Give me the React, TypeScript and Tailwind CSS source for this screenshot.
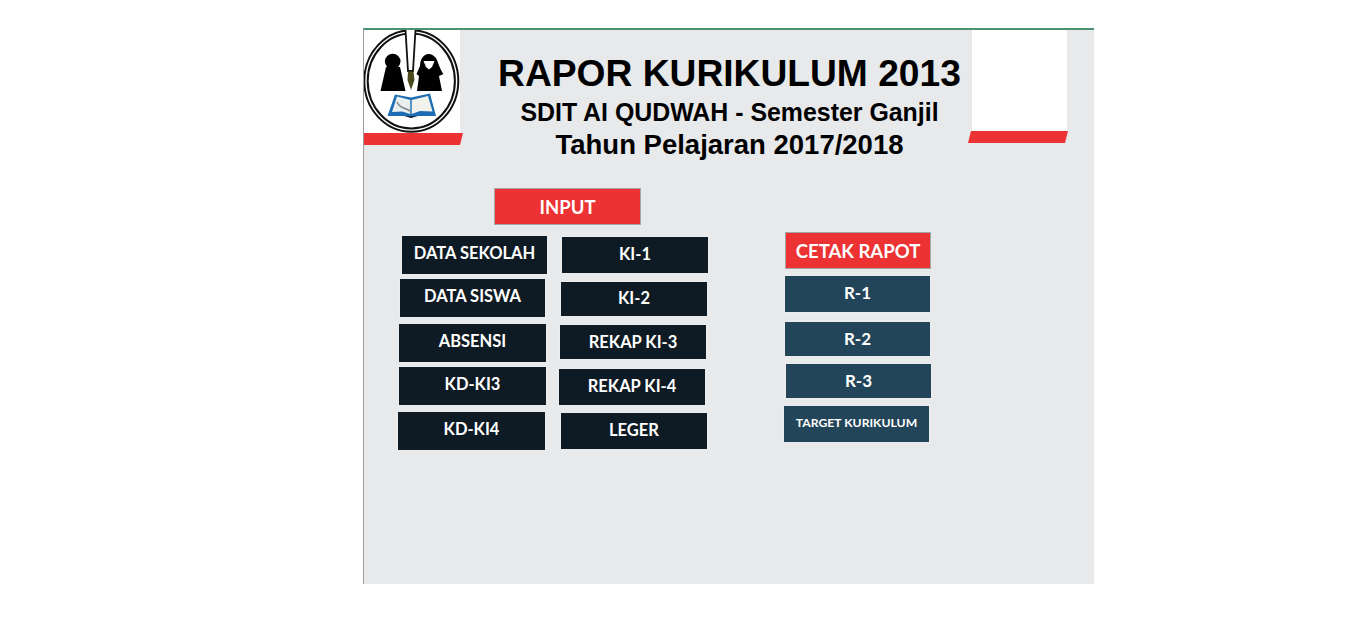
const Dark = ({ label, className }: { label: string; className: string }) => (
  <div className={`bg-[#0f1b24] text-white font-bold text-[16.5px] leading-none flex justify-center shadow-[0_0_0_1px_#ebedef] ${className}`}>
    {label}
  </div>
);

const Teal = ({ label, className }: { label: string; className: string }) => (
  <div className={`bg-[#23455a] text-white font-bold leading-none flex justify-center shadow-[0_0_0_1px_#ebedef] ${className}`}>
    {label}
  </div>
);

const Red = ({ label, className }: { label: string; className: string }) => (
  <div className={`bg-[#ec3232] text-white font-bold text-[18.5px] leading-none flex justify-center border border-[#a3a5a7] ${className}`}>
    {label}
  </div>
);

const Logo = () => (
  <svg viewBox="0 0 96 103" width="96" height="103" className="block">
    <ellipse cx="47.3" cy="51" rx="47" ry="50.8" fill="none" stroke="#111" strokeWidth="2" />
    <ellipse cx="47.3" cy="51" rx="43.6" ry="47.4" fill="none" stroke="#111" strokeWidth="2" />
    <path d="M41.5 0 L44 41 L49 41 L51.5 0" fill="#fff" stroke="#111" strokeWidth="1.8" />
    <circle cx="28.7" cy="31.5" r="7.8" fill="#000" />
    <path d="M22 37 L36 37 L41.5 61 L16.5 61 Z" fill="#000" />
    <path d="M65 24 C 59 24 56 30 56 36 L52.5 44 L55 46 L53 61 L78 61 L75 46 L79.5 44 C 75 38 74 30 71 27 C 69 25 67 24 65 24 Z" fill="#000" />
    <path d="M59.5 31 L70.5 31 L68 37 L65 39.5 L62 37 Z" fill="#fff" />
    <path d="M44 41.5 L49.5 41.5 L50.5 50 L47 60 L43.5 50 Z" fill="#4b4a1e" />
    <path d="M23.5 86 L31 64.5 L47 67.5 L66 63.5 L72 86 L50 86 L47 88 L44 86 Z" fill="#1c6db3" />
    <path d="M28 82 L33 66.5 L46.3 70 L46.3 84 L38 81.5 Z" fill="#e9eeee" />
    <path d="M47.7 70 L64 66 L68.5 81.5 L56 81 L47.7 84 Z" fill="#f2f2ec" />
    <path d="M33 72 C 36 79 40 77 46 81" fill="none" stroke="#7d868b" strokeWidth="1.6" />
    <path d="M40 86 L54 86 L47 88 Z" fill="#12263f" />
  </svg>
);

export default function App() {
  return (
    <div className="w-[1364px] h-[638px] bg-white pt-[28px] pl-[363px] font-['Lato',sans-serif]">
      <div className="w-[731px] h-[556px] bg-[#e7e9eb] border-t-2 border-t-[#4d9270] border-l border-l-[#9a9c9c]">
        <header className="flex items-start h-[115px]">
          <div className="w-[100px] shrink-0">
            <div className="w-[96px] h-[103px] bg-white overflow-hidden">
              <Logo />
            </div>
            <div className="w-[99px] h-[12px] bg-[#ec3232] [clip-path:polygon(0_0,100%_0,97%_100%,0_100%)]" />
          </div>
          <div className="w-[504px] shrink-0 pl-[27px] flex flex-col items-center font-['Liberation_Sans',sans-serif] font-bold text-black">
            <div className="text-[37.2px] leading-[44px] mt-[21px] whitespace-nowrap">RAPOR KURIKULUM 2013</div>
            <div className="text-[24.9px] leading-[28px] mt-[3px] whitespace-nowrap">SDIT AI QUDWAH - Semester Ganjil</div>
            <div className="text-[27.5px] leading-[32px] mt-[3px] whitespace-nowrap">Tahun Pelajaran 2017/2018</div>
          </div>
          <div className="shrink-0">
            <div className="w-[95px] h-[101px] bg-white ml-[4px]" />
            <div className="w-[100px] h-[12px] bg-[#ec3232] [clip-path:polygon(3%_0,100%_0,97%_100%,0_100%)]" />
          </div>
        </header>

        <main className="flex pt-[43px]">
          <section className="w-[192px] ml-[34px] shrink-0 flex flex-col">
            <Dark label="DATA SEKOLAH" className="w-[145px] h-[38px] ml-[4px] mt-[48px] pt-[9px]" />
            <Dark label="DATA SISWA" className="w-[145px] h-[38px] ml-[2px] mt-[5px] pt-[9px]" />
            <Dark label="ABSENSI" className="w-[147px] h-[38px] ml-[1px] mt-[7px] pt-[9px]" />
            <Dark label="KD-KI3" className="w-[147px] h-[38px] ml-[1px] mt-[5px] pt-[9px]" />
            <Dark label="KD-KI4" className="w-[147px] h-[38px] mt-[7px] pt-[9px]" />
          </section>

          <section className="w-[225px] shrink-0 flex flex-col relative -ml-[31px]">
            <Red label="INPUT" className="absolute -left-[65px] top-0 w-[147px] h-[37px] pt-[9px]" />
            <Dark label="KI-1" className="w-[146px] h-[36px] mt-[49px] ml-[3px] pt-[9px]" />
            <Dark label="KI-2" className="w-[146px] h-[34px] mt-[9px] ml-[2px] pt-[8px]" />
            <Dark label="REKAP KI-3" className="w-[146px] h-[34px] mt-[9px] ml-[1px] pt-[9px]" />
            <Dark label="REKAP KI-4" className="w-[146px] h-[36px] mt-[10px] pt-[9px]" />
            <Dark label="LEGER" className="w-[146px] h-[36px] mt-[8px] ml-[2px] pt-[9px]" />
          </section>

          <section className="shrink-0 flex flex-col">
            <Red label="CETAK RAPOT" className="w-[146px] h-[37px] mt-[44px] ml-[1px] pt-[9px]" />
            <Teal label="R-1" className="w-[145px] h-[36px] mt-[7px] ml-[1px] pt-[8px] text-[17px]" />
            <Teal label="R-2" className="w-[145px] h-[34px] mt-[10px] ml-[1px] pt-[8px] text-[17px]" />
            <Teal label="R-3" className="w-[145px] h-[34px] mt-[8px] ml-[2px] pt-[8px] text-[17px]" />
            <Teal label="TARGET KURIKULUM" className="w-[145px] h-[36px] mt-[8px] pt-[11px] text-[12.2px]" />
          </section>
        </main>
      </div>
    </div>
  );
}
